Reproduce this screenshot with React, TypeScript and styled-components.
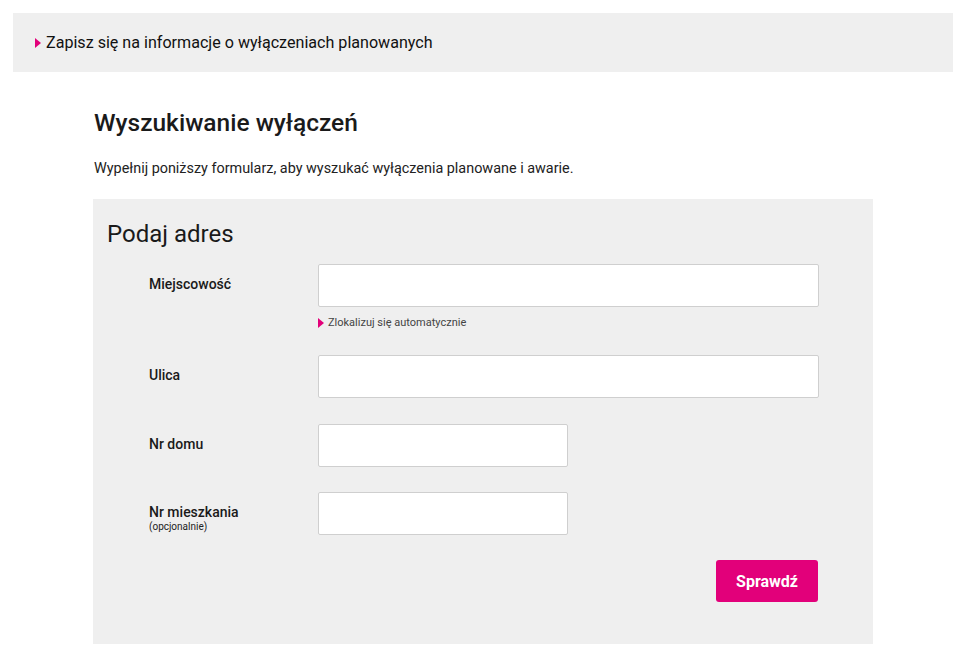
import { createGlobalStyle, styled } from 'styled-components';

const GlobalStyle = createGlobalStyle`
  html, body {
    margin: 0;
    padding: 0;
    background: #ffffff;
    font-family: Roboto, "Noto Sans", sans-serif;
    color: #1a1a1a;
  }
`;

const Page = styled.div`
  padding: 13px 14px 0 13px;
`;

const NoticeBar = styled.div`
  display: flex;
  align-items: center;
  gap: 5px;
  height: 59px;
  padding-left: 22px;
  background-color: #efefef;
  font-size: 16.1px;
  color: #111;
`;

const Arrow = styled.span<{ size: number }>`
  display: inline-block;
  width: 0;
  height: 0;
  border-top: ${(p) => p.size}px solid transparent;
  border-bottom: ${(p) => p.size}px solid transparent;
  border-left: ${(p) => p.size * 1.2}px solid #e2007a;
  flex-shrink: 0;
`;

const Content = styled.div`
  width: 780px;
  margin: 0 0 0 80px;
`;

const Heading = styled.h1`
  margin: 36px 0 0 1px;
  font-size: 24.5px;
  font-weight: 500;
  line-height: 30px;
`;

const Intro = styled.p`
  margin: 21px 0 0 1px;
  font-size: 14.4px;
  line-height: 20px;
  color: #222;
`;

const Panel = styled.section`
  margin-top: 20px;
  height: 445px;
  padding: 20px 55px 0 14px;
  box-sizing: border-box;
  background-color: #efefef;
`;

const PanelTitle = styled.h2`
  margin: 0 0 15px;
  font-size: 24px;
  font-weight: 400;
  line-height: 30px;
`;

const Row = styled.div<{ gapBelow: number }>`
  display: grid;
  grid-template-columns: 169px 1fr;
  margin-left: 42px;
  margin-bottom: ${(p) => p.gapBelow}px;
`;

const LabelBox = styled.div`
  padding-top: 12px;
`;

const Label = styled.label`
  display: block;
  font-size: 14px;
  font-weight: 500;
  line-height: 17px;
`;

const SubLabel = styled.span`
  display: block;
  font-size: 10px;
  line-height: 11px;
  color: #222;
`;

const Input = styled.input<{ wide?: boolean }>`
  box-sizing: border-box;
  width: ${(p) => (p.wide ? '501px' : '250px')};
  height: 43px;
  border: 1px solid #cfcfcf;
  border-radius: 2px;
  background: #fff;
  outline: none;
`;

const Locate = styled.a`
  display: flex;
  align-items: center;
  gap: 4px;
  margin-top: 9px;
  font-size: 11px;
  color: #444;
  cursor: pointer;
`;

const Actions = styled.div`
  display: flex;
  justify-content: flex-end;
  margin-top: 1px;
`;

const Button = styled.button`
  width: 102px;
  height: 42px;
  border: none;
  border-radius: 3px;
  background-color: #e2007a;
  color: #fff;
  font-family: inherit;
  font-size: 16px;
  font-weight: 700;
  cursor: pointer;
`;

const App = () => (
  <Page>
    <GlobalStyle />
    <NoticeBar>
      <Arrow size={5} />
      Zapisz się na informacje o wyłączeniach planowanych
    </NoticeBar>
    <Content>
      <Heading>Wyszukiwanie wyłączeń</Heading>
      <Intro>
        Wypełnij poniższy formularz, aby wyszukać wyłączenia planowane i awarie.
      </Intro>
      <Panel>
        <PanelTitle>Podaj adres</PanelTitle>
        <Row gapBelow={26}>
          <LabelBox>
            <Label>Miejscowość</Label>
          </LabelBox>
          <div>
            <Input wide />
            <Locate>
              <Arrow size={5} />
              Zlokalizuj się automatycznie
            </Locate>
          </div>
        </Row>
        <Row gapBelow={26}>
          <LabelBox>
            <Label>Ulica</Label>
          </LabelBox>
          <Input wide />
        </Row>
        <Row gapBelow={25}>
          <LabelBox>
            <Label>Nr domu</Label>
          </LabelBox>
          <Input />
        </Row>
        <Row gapBelow={25}>
          <LabelBox>
            <Label>Nr mieszkania</Label>
            <SubLabel>(opcjonalnie)</SubLabel>
          </LabelBox>
          <Input />
        </Row>
        <Actions>
          <Button>Sprawdź</Button>
        </Actions>
      </Panel>
    </Content>
  </Page>
);

export default App;
